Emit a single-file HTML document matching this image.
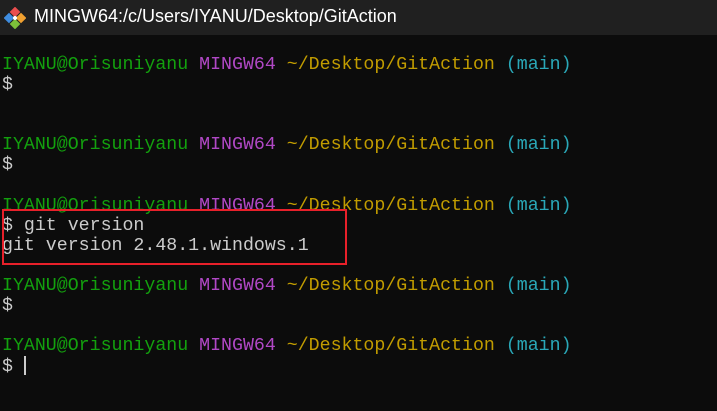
<!DOCTYPE html>
<html><head><style>
body{margin:0;width:717px;height:411px;background:#0c0c0c;overflow:hidden;position:relative;font-family:"Liberation Mono",monospace}
.tb{position:absolute;left:0;top:0;width:717px;height:35px;background:#202020;}
.tb span{position:absolute;left:34px;top:6px;font:18px "Liberation Sans",sans-serif;color:#ffffff}
.term{position:absolute;left:2px;top:55px;font-size:18.25px;line-height:20.1px;color:#cccccc;white-space:pre}
.g{color:#13a10e}.p{color:#b148c6}.y{color:#c19c00}.c{color:#2aa8b8}
.box{position:absolute;left:2px;top:209px;width:341px;height:52px;border:2px solid #e8202a}
.cur{display:inline-block;width:2px;height:19px;background:#ccc;vertical-align:-4px}
</style></head><body>
<div class="tb">
<svg style="position:absolute;left:4px;top:7px" width="22" height="22" viewBox="0 0 22 22">
<g transform="rotate(45 11 11)"><rect x="3" y="3" width="7.5" height="7.5" fill="#e94e4e"/><rect x="11.5" y="3" width="7.5" height="7.5" fill="#f0a030"/><rect x="3" y="11.5" width="7.5" height="7.5" fill="#3f8de0"/><rect x="11.5" y="11.5" width="7.5" height="7.5" fill="#7cbf3a"/></g>
<circle cx="11" cy="11" r="2" fill="#fff"/></svg>
<span>MINGW64:/c/Users/IYANU/Desktop/GitAction</span></div>
<div class="term"><span class="g">IYANU@Orisuniyanu</span> <span class="p">MINGW64</span> <span class="y">~/Desktop/GitAction</span> <span class="c">(main)</span>
$


<span class="g">IYANU@Orisuniyanu</span> <span class="p">MINGW64</span> <span class="y">~/Desktop/GitAction</span> <span class="c">(main)</span>
$

<span class="g">IYANU@Orisuniyanu</span> <span class="p">MINGW64</span> <span class="y">~/Desktop/GitAction</span> <span class="c">(main)</span>
$ git version
git version 2.48.1.windows.1

<span class="g">IYANU@Orisuniyanu</span> <span class="p">MINGW64</span> <span class="y">~/Desktop/GitAction</span> <span class="c">(main)</span>
$

<span class="g">IYANU@Orisuniyanu</span> <span class="p">MINGW64</span> <span class="y">~/Desktop/GitAction</span> <span class="c">(main)</span>
$ <span class="cur"></span></div>
<div class="box"></div>
</body></html>
